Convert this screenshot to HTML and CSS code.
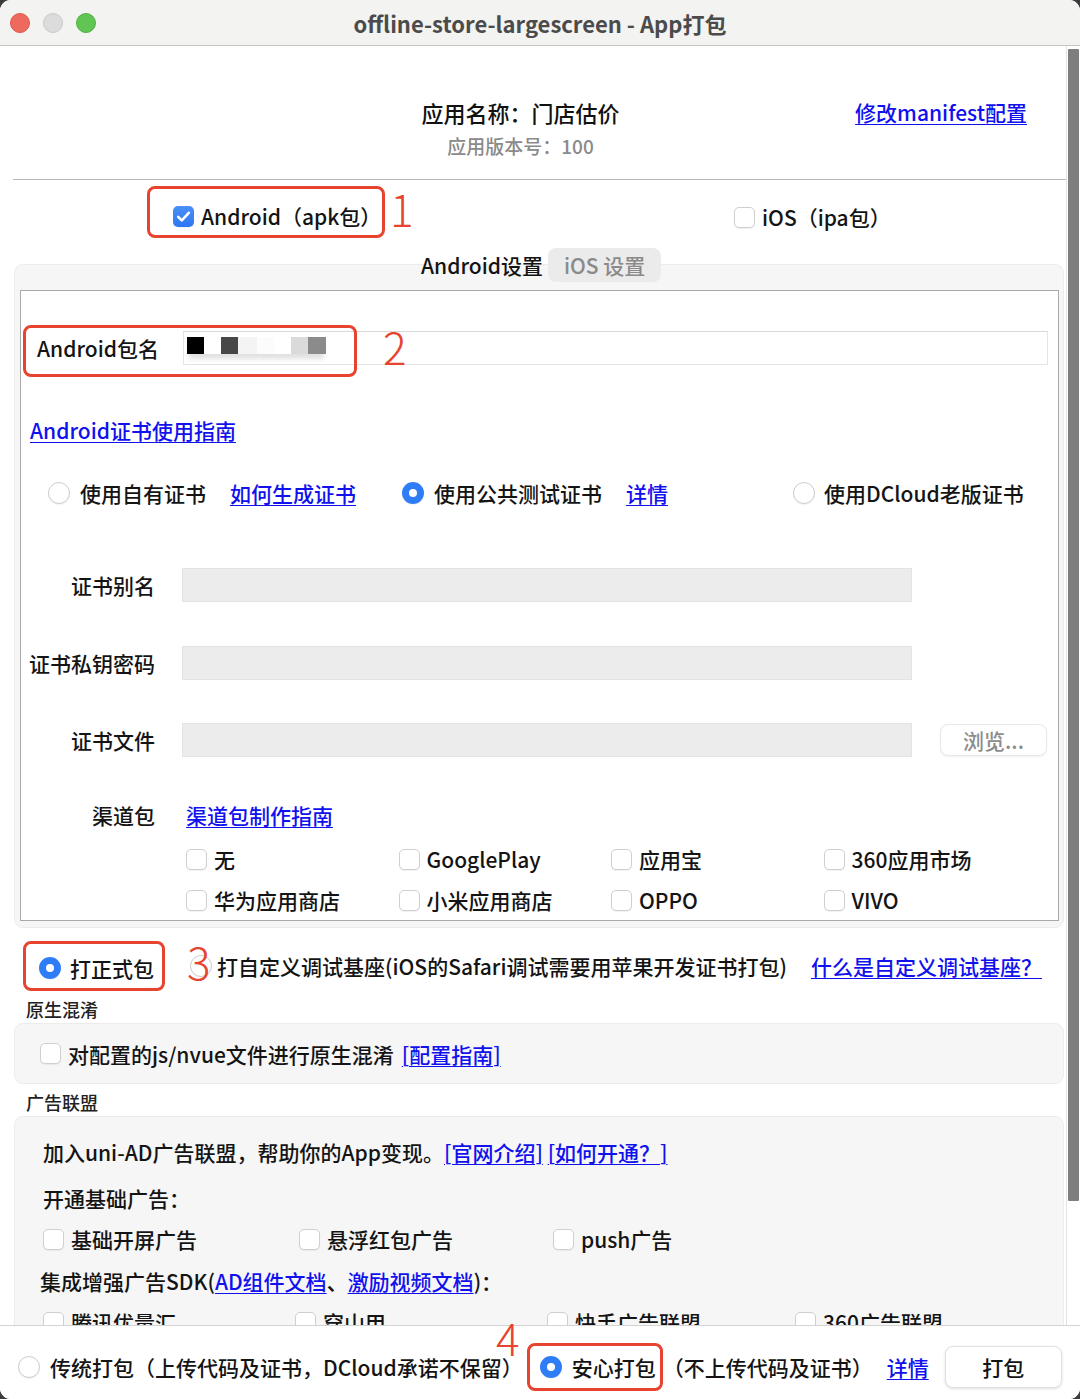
FILE: index.html
```html
<!DOCTYPE html>
<html lang="zh-CN">
<head>
<meta charset="utf-8">
<title>App打包</title>
<link rel="stylesheet" href="styles.css">
</head>
<body>
<div class="window">
  <div class="titlebar">
    <div class="lights"><span class="light l-red"></span><span class="light l-gray"></span><span class="light l-green"></span></div>
    <div class="title">offline-store-largescreen - App打包</div>
    <div></div>
  </div>

  <div class="scroll">
    <div class="content">
      <header class="app-head">
        <div class="app-info">
          <div class="app-name">应用名称：门店估价</div>
          <div class="app-ver">应用版本号：100</div>
        </div>
        <a class="link manifest">修改manifest配置</a>
      </header>

      <div class="platforms">
        <div class="plat-wrap">
          <label class="mark-box box1"><span class="cb checked"><svg viewBox="0 0 21 21" width="21" height="21"><path d="M5.2 10.8 L8.8 14.4 L15.8 6.8" fill="none" stroke="#fff" stroke-width="2.6" stroke-linecap="round" stroke-linejoin="round"/></svg></span><span>Android（apk包）</span></label>
          <span class="num num1">1</span>
        </div>
        <label class="plat-ios"><span class="cb"></span><span>iOS（ipa包）</span></label>
      </div>

      <div class="tabs"><span class="tab tab-active">Android设置</span><span class="tab tab-ios">iOS 设置</span></div>

      <div class="panel">
        <div class="inner">
          <div class="pkg-row">
            <span class="pkg-label">Android包名</span>
            <div class="pkg-input">
              <div class="blur">
                <span class="bk b1"></span><span class="bk b2"></span><span class="bk b3"></span><span class="bk b4"></span><span class="bk b5"></span><span class="bk b6"></span><span class="bk b7"></span><span class="bk b8"></span>
              </div>
            </div>
            <span class="mark-abs box2"></span>
            <span class="num num2">2</span>
          </div>

          <div class="guide"><a class="link">Android证书使用指南</a></div>

          <div class="cert-choice">
            <div class="choice"><span class="radio"></span><span>使用自有证书</span><a class="link choice-link">如何生成证书</a></div>
            <div class="choice"><span class="radio on"></span><span>使用公共测试证书</span><a class="link choice-link">详情</a></div>
            <div class="choice choice3"><span class="radio"></span><span>使用DCloud老版证书</span></div>
          </div>

          <div class="cert-row first"><span class="cert-label">证书别名</span><span class="field"></span></div>
          <div class="cert-row r2"><span class="cert-label">证书私钥密码</span><span class="field"></span></div>
          <div class="cert-row r3"><span class="cert-label">证书文件</span><span class="field"></span><span class="browse">浏览...</span></div>

          <div class="ch-head"><span class="cert-label">渠道包</span><a class="link ch-link">渠道包制作指南</a></div>
          <div class="ch-grid">
            <label class="ck"><span class="cb"></span>无</label>
            <label class="ck"><span class="cb"></span>GooglePlay</label>
            <label class="ck"><span class="cb"></span>应用宝</label>
            <label class="ck"><span class="cb"></span>360应用市场</label>
            <label class="ck"><span class="cb"></span>华为应用商店</label>
            <label class="ck"><span class="cb"></span>小米应用商店</label>
            <label class="ck"><span class="cb"></span>OPPO</label>
            <label class="ck"><span class="cb"></span>VIVO</label>
          </div>
        </div>
      </div>

      <div class="formal-row">
        <label class="mark-box box3"><span class="radio on"></span><span>打正式包</span></label>
        <span class="radio r-custom"></span>
        <span class="num num3">3</span>
        <span class="custom-text">打自定义调试基座(iOS的Safari调试需要用苹果开发证书打包)</span>
        <a class="link custom-link">什么是自定义调试基座？</a>
      </div>

      <div class="sec-title">原生混淆</div>
      <div class="gray-box obf">
        <span class="cb"></span><span>对配置的js/nvue文件进行原生混淆</span><a class="link obf-link">[配置指南]</a>
      </div>

      <div class="sec-title">广告联盟</div>
      <div class="gray-box ad">
        <div class="ad-line">加入uni-AD广告联盟，帮助你的App变现。<a class="link">[官网介绍]</a> <a class="link">[如何开通？]</a></div>
        <div class="ad-line ad-basic">开通基础广告：</div>
        <div class="ad-row3">
          <label class="ck"><span class="cb"></span>基础开屏广告</label>
          <label class="ck"><span class="cb"></span>悬浮红包广告</label>
          <label class="ck"><span class="cb"></span>push广告</label>
        </div>
        <div class="ad-line ad-sdk">集成增强广告SDK(<a class="link">AD组件文档</a>、<a class="link">激励视频文档</a>)：</div>
        <div class="ad-row4">
          <label class="ck"><span class="cb"></span>腾讯优量汇</label>
          <label class="ck"><span class="cb"></span>穿山甲</label>
          <label class="ck"><span class="cb"></span>快手广告联盟</label>
          <label class="ck"><span class="cb"></span>360广告联盟</label>
        </div>
      </div>
    </div>
    <div class="scroll-track"><div class="thumb"></div></div>
  </div>

  <footer class="footer">
    <span class="radio"></span><span class="f-text">传统打包（上传代码及证书，DCloud承诺不保留）</span>
    <label class="mark-box box4"><span class="radio on"></span><span>安心打包</span></label>
    <span class="f-text">（不上传代码及证书）</span>
    <a class="link f-link">详情</a>
    <span class="pack-btn">打包</span>
    <span class="num num4">4</span>
  </footer>
</div>
</body>
</html>
```

FILE: styles.css
```css
* { box-sizing: border-box; }
html { background: #3b3b3b; }
body {
  margin: 0;
  width: 1080px;
  height: 1399px;
  overflow: hidden;
  font-family: "Noto Sans CJK SC", "Noto Sans", sans-serif;
  font-size: 21px;
  font-weight: 500;
  line-height: 28px;
  color: #141414;
}
.window {
  width: 1080px;
  height: 1399px;
  background: #fff;
  border-radius: 11px;
  overflow: hidden;
  display: flex;
  flex-direction: column;
}

/* title bar */
.titlebar {
  flex: none;
  height: 46px;
  background: #f3f3f2;
  border-bottom: 1px solid #c6c6c6;
  display: grid;
  grid-template-columns: 1fr auto 1fr;
  align-items: center;
}
.lights { display: flex; gap: 13px; padding-left: 10px; }
.light { width: 20px; height: 20px; border-radius: 50%; display: block; }
.l-red { background: #ee6a5f; border: 1px solid #e0564b; }
.l-gray { background: #dcdcdc; border: 1px solid #c9c9c9; }
.l-green { background: #61c554; border: 1px solid #52b045; }
.title { font-size: 22px; font-weight: 700; color: #4b4b4b; }

/* scroll area */
.scroll { flex: none; height: 1279px; display: flex; }
.content { flex: 1; overflow: hidden; }
.scroll-track { flex: none; width: 14px; border-left: 1px solid #e2e2e2; padding: 3px 1px 0 1px; background: #fff; }
.thumb { width: 11px; height: 1152px; background: #7e7e7e; border-radius: 1px; }

.link { color: #1111ee; text-decoration: underline; text-underline-offset: 3px; text-decoration-thickness: 1px; cursor: pointer; }

/* header */
.app-head {
  margin-left: 13px;
  height: 134px;
  border-bottom: 1px solid #b9b9b9;
  display: flex;
  align-items: flex-start;
  padding-top: 51px;
}
.app-info { margin-left: 405px; width: 205px; text-align: center; }
.app-name { font-size: 22px; line-height: 30px; color: #111; white-space: nowrap; }
.app-ver { font-size: 19px; line-height: 26px; color: #8a8a8a; margin-top: 6px; white-space: nowrap; }
.manifest { margin-left: auto; margin-right: 39px; line-height: 30px; }

/* platform checkboxes */
.platforms {
  display: grid;
  grid-template-columns: 734px auto;
  height: 68px;
  padding-top: 6px;
  align-items: start;
}
.plat-wrap { display: flex; align-items: center; padding-left: 147px; }
.mark-box {
  border: 3px solid #e6442f;
  border-radius: 8px;
  display: flex;
  align-items: center;
}
.box1 { padding: 13px 6px 5px 23px; gap: 7px; height: 52px; width: 238px; white-space: nowrap; }
.plat-ios { display: flex; align-items: center; gap: 7px; padding-top: 17px; }

.num {
  color: #e6442f;
  font-size: 44px;
  line-height: 44px;
  font-weight: 300;
}
.num1 { margin-left: 5px; margin-top: -8px; }

.cb {
  flex: none;
  width: 21px;
  height: 21px;
  border: 1px solid #cfcfcf;
  border-radius: 5px;
  background: #fff;
  box-shadow: 0 1px 1px rgba(0,0,0,0.06);
  display: inline-block;
}
.cb.checked {
  border: none;
  background: linear-gradient(#4a90f8, #2c76f3);
  display: flex;
}
.radio {
  flex: none;
  width: 22px;
  height: 22px;
  border-radius: 50%;
  border: 1px solid #cdcdcd;
  background: #fff;
  box-shadow: 0 1px 1px rgba(0,0,0,0.05);
  display: inline-block;
}
.radio.on {
  border: 7px solid #2f7df6;
  background: #fff;
}

/* tabs */
.tabs {
  position: relative;
  z-index: 1;
  display: flex;
  align-items: center;
  height: 34px;
  padding-left: 421px;
}
.tab-active { margin-right: 5px; color: #141414; }
.tab-ios { background: #ebebeb; color: #8a8a8a; border-radius: 8px; height: 34px; line-height: 34px; padding: 0 16px; }

/* panel */
.panel {
  margin: -18px 2px 0 14px;
  background: #f6f6f6;
  border: 1px solid #ececec;
  border-radius: 9px;
  padding: 25px 4px 6px 5px;
}
.inner {
  background: #fff;
  border: 1px solid #a9a9a9;
  height: 631px;
}
.pkg-row {
  position: relative;
  display: flex;
  align-items: center;
  height: 34px;
  margin-top: 40px;
}
.pkg-label { width: 146px; margin-left: 16px; flex: none; }
.pkg-input {
  flex: 1;
  margin-right: 10px;
  height: 34px;
  border: 1px solid #e4e4e4;
  border-top-color: #d8d8d8;
  display: flex;
  align-items: center;
  padding-left: 3px;
}
.blur { display: flex; height: 17px; margin-top: -5px; box-shadow: 0 7px 5px -2px rgba(0,0,0,0.12); }
.bk { display: block; height: 17px; }
.b1 { width: 17px; background: #000; }
.b2 { width: 17px; background: #fff; }
.b3 { width: 17px; background: #474747; }
.b4 { width: 19px; background: #f4f4f4; }
.b5 { width: 18px; background: #fcfcfc; }
.b6 { width: 16px; background: #fff; }
.b7 { width: 17px; background: #dadada; }
.b8 { width: 18px; background: #8b8b8b; }
.mark-abs {
  position: absolute;
  border: 3px solid #e6442f;
  border-radius: 8px;
}
.box2 { left: 2px; top: -6px; width: 334px; height: 52px; }
.num2 { position: absolute; left: 362px; top: -7px; }

.guide { margin-top: 51px; padding-left: 9px; height: 28px; }

.cert-choice {
  margin-top: 35px;
  padding-left: 27px;
  display: grid;
  grid-template-columns: 354px 391px auto;
  height: 28px;
}
.choice { display: flex; align-items: center; white-space: nowrap; }
.choice .radio { margin-right: 10px; }
.choice3 .radio { margin-right: 9px; }
.choice-link { margin-left: 24px; }

.cert-row { display: flex; align-items: center; height: 34px; }
.cert-row.first { margin-top: 61px; }
.cert-row.r2 { margin-top: 44px; }
.cert-row.r3 { margin-top: 43px; }
.cert-label { width: 134px; text-align: right; margin-right: 27px; flex: none; white-space: nowrap; }
.field { width: 730px; height: 34px; background: #ececec; border: 1px solid #e3e3e3; display: block; }
.browse {
  margin-left: 28px;
  width: 107px;
  height: 32px;
  border: 1px solid #e8e8e8;
  border-radius: 8px;
  background: #fff;
  box-shadow: 0 1px 2px rgba(0,0,0,0.06);
  color: #8c8c8c;
  text-align: center;
  line-height: 30px;
}

.ch-head { margin-top: 44px; display: flex; height: 28px; }
.ch-head .cert-label { margin-right: 31px; }
.ch-grid {
  margin-top: 16px;
  padding-left: 165px;
  display: grid;
  grid-template-columns: repeat(4, 212.5px);
  row-gap: 13px;
}
.ck { display: flex; align-items: center; gap: 7px; height: 28px; white-space: nowrap; }

/* formal row */
.formal-row {
  position: relative;
  margin-top: 13px;
  padding-left: 23px;
  display: flex;
  align-items: center;
  white-space: nowrap;
}
.box3 { padding: 10px 10px 6px 13px; gap: 9px; height: 50px; width: 142px; }
.r-custom { margin-left: 25px; }
.num3 { position: absolute; left: 187px; top: -2px; }
.custom-text { margin-left: 5px; }
.custom-link { margin-left: 24px; }

.sec-title { margin-top: 6px; padding-left: 26px; font-size: 18px; line-height: 24px; color: #222; }
.gray-box {
  margin: 2px 2px 0 14px;
  background: #f6f6f6;
  border: 1px solid #ececec;
  border-radius: 9px;
}
.obf { height: 61px; display: flex; align-items: center; padding-left: 25px; white-space: nowrap; }
.obf .cb { margin-right: 7px; }
.obf-link { margin-left: 8px; }

.ad { padding: 21px 0 0 28px; height: 260px; }
.ad-line { height: 28px; white-space: nowrap; }
.ad-basic { margin-top: 18px; }
.ad-row3 { margin-top: 13px; display: grid; grid-template-columns: 256px 254px auto; }
.ad-sdk { margin-top: 14px; margin-left: -3px; }
.ad-row4 { margin-top: 13px; display: grid; grid-template-columns: 252px 252px 248px auto; }

/* footer */
.footer {
  flex: none;
  position: relative;
  height: 74px;
  border-top: 1px solid #d3d3d3;
  background: #fff;
  display: flex;
  align-items: center;
  padding: 8px 0 0 18px;
  white-space: nowrap;
}
.footer > .radio { margin-right: 10px; }
.box4 { margin-left: 4px; padding: 0 4px 0 10px; gap: 10px; height: 48px; }
.f-link { margin-left: 14px; }
.pack-btn {
  margin-left: 16px;
  width: 117px;
  height: 42px;
  border: 1px solid #e0e0e0;
  border-radius: 8px;
  background: #fff;
  box-shadow: 0 1px 3px rgba(0,0,0,0.12);
  text-align: center;
  line-height: 40px;
}
.num4 { position: absolute; left: 496px; top: -11px; }
```
